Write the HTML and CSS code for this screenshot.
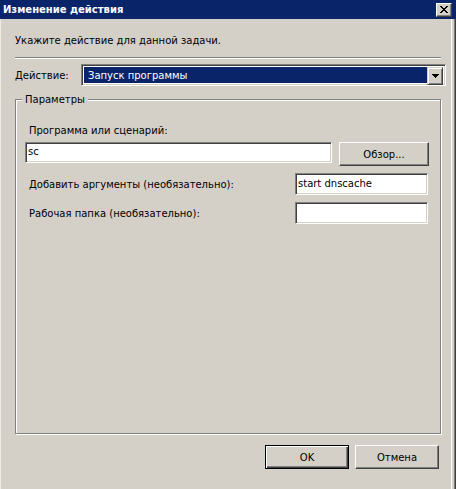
FILE: index.html
```html
<!DOCTYPE html>
<html lang="ru">
<head>
<meta charset="utf-8">
<title>Изменение действия</title>
<link rel="stylesheet" href="styles.css">
</head>
<body>
<div class="window">
  <div class="titlebar">
    <span class="title">Изменение действия</span>
    <span class="close">
      <svg width="8" height="7" viewBox="0 0 8 7" shape-rendering="crispEdges"><path d="M0 0h2v1h-2z M1 1h2v1h-2z M2 2h2v1h-2z M3 3h2v1h-2z M2 4h2v1h-2z M1 5h2v1h-2z M0 6h2v1h-2z M6 0h2v1h-2z M5 1h2v1h-2z M4 2h2v1h-2z M4 4h2v1h-2z M5 5h2v1h-2z M6 6h2v1h-2z" fill="#000"/></svg>
    </span>
  </div>
  <div class="intro">Укажите действие для данной задачи.</div>
  <div class="sep"></div>
  <div class="action-row">
    <span class="action-label">Действие:</span>
    <div class="select">
      <span class="select-value">Запуск программы</span>
      <span class="select-btn"><svg width="7" height="4" viewBox="0 0 7 4" shape-rendering="crispEdges"><path d="M0 0h7v1h-7z M1 1h5v1h-5z M2 2h3v1h-3z M3 3h1v1h-1z" fill="#000"/></svg></span>
    </div>
  </div>
  <div class="group">
    <span class="legend">Параметры</span>
    <div class="label">Программа или сценарий:</div>
    <div class="prog-row">
      <div class="input wide">sc</div>
      <div class="btn browse">Обзор...</div>
    </div>
    <div class="grid">
      <div class="label">Добавить аргументы (необязательно):</div>
      <div class="input">start dnscache</div>
      <div class="label">Рабочая папка (необязательно):</div>
      <div class="input"></div>
    </div>
  </div>
  <div class="footer">
    <div class="btn default">OK</div>
    <div class="btn">Отмена</div>
  </div>
</div>
</body>
</html>
```

FILE: styles.css
```css
* { box-sizing: border-box; }
html, body { margin: 0; padding: 0; }
body {
  font-family: "DejaVu Sans", "Liberation Sans", sans-serif;
  font-size: 10px;
  color: #000;
  background: #d4d0c8;
}
.window {
  width: 456px;
  height: 489px;
  background: #d4d0c8;
  box-shadow: inset 1px 0 0 #ecebe6, inset -1px 0 0 #404040, inset -2px 0 0 #808080, inset -4px 0 0 #d4d0c8, inset -5px 0 0 #ffffff;
  display: flex;
  flex-direction: column;
}
.titlebar {
  height: 19px;
  background: #0a246a;
  color: #fff;
  display: flex;
  align-items: center;
  justify-content: space-between;
  padding: 0 4px 0 3px;
}
.title {
  font-weight: bold;
  font-size: 10px;
  line-height: 13px;
}
.close {
  width: 16px;
  height: 14px;
  background: #d4d0c8;
  border-top: 1px solid #fff;
  border-left: 1px solid #fff;
  border-right: 1px solid #404040;
  border-bottom: 1px solid #404040;
  box-shadow: inset -1px -1px 0 #808080;
  display: flex;
  align-items: center;
  justify-content: center;
  padding: 0 1px 1px 0;
}
.close svg { display: block; }
.intro {
  margin: 15px 0 0 15px;
  line-height: 13px;
  height: 13px;
}
.sep {
  margin: 10px 0 0 15px;
  width: 426px;
  height: 2px;
  border-top: 1px solid #808080;
  border-bottom: 1px solid #fff;
}
.action-row {
  margin-top: 5px;
  display: flex;
  align-items: center;
  height: 22px;
}
.action-label {
  width: 81px;
  padding-left: 15px;
  line-height: 13px;
}
.select {
  width: 365px;
  height: 22px;
  border-top: 1px solid #808080;
  border-left: 1px solid #808080;
  border-right: 1px solid #fff;
  border-bottom: 1px solid #fff;
  box-shadow: inset 1px 1px 0 #404040, inset -1px -1px 0 #d4d0c8;
  padding: 2px;
  display: flex;
  background: #fff;
}
.select-value {
  flex: 1;
  background: #0a246a;
  color: #fff;
  line-height: 16px;
  padding-left: 3px;
  border: 1px solid transparent;
}
.select-btn {
  width: 16px;
  height: 18px;
  background: #d4d0c8;
  border-top: 1px solid #d4d0c8;
  border-left: 1px solid #d4d0c8;
  border-right: 1px solid #404040;
  border-bottom: 1px solid #404040;
  box-shadow: inset 1px 1px 0 #fff, inset -1px -1px 0 #808080;
  display: flex;
  align-items: center;
  justify-content: center;
}
.select-btn svg { display: block; }
.group {
  position: relative;
  margin: 13px 0 0 15px;
  width: 426px;
  height: 335px;
  border: 1px solid #808080;
  box-shadow: inset 1px 1px 0 #fff, 1px 1px 0 #fff;
  padding: 24px 11px 0 9px;
}
.legend {
  position: absolute;
  top: -7px;
  left: 6px;
  background: #d4d0c8;
  padding: 0 3px;
  line-height: 13px;
}
.label {
  padding-left: 4px;
  line-height: 13px;
}
.prog-row {
  margin-top: 5px;
  display: flex;
  gap: 7px;
  align-items: flex-start;
}
.input {
  height: 22px;
  background: #fff;
  border-top: 1px solid #808080;
  border-left: 1px solid #808080;
  border-right: 1px solid #fff;
  border-bottom: 1px solid #fff;
  box-shadow: inset 1px 1px 0 #404040, inset -1px -1px 0 #d4d0c8;
  padding: 0 2px;
  line-height: 19px;
  white-space: nowrap;
}
.input.wide { flex: 1; height: 21px; line-height: 18px; }
.btn {
  height: 24px;
  background: #d4d0c8;
  border-top: 1px solid #fff;
  border-left: 1px solid #fff;
  border-right: 1px solid #404040;
  border-bottom: 1px solid #404040;
  box-shadow: inset -1px -1px 0 #808080;
  display: flex;
  align-items: center;
  justify-content: center;
  line-height: 13px;
  width: 84px;
}
.btn.browse { width: 90px; }
.btn.default {
  border: 1px solid #000;
  box-shadow: inset 1px 1px 0 #fff, inset -1px -1px 0 #404040, inset -2px -2px 0 #808080;
}
.grid {
  margin-top: 7px;
  margin-right: 1px;
  display: grid;
  grid-template-columns: 1fr 133px;
  row-gap: 7px;
  align-items: center;
}
.footer {
  margin-top: 11px;
  display: flex;
  justify-content: flex-end;
  gap: 6px;
  padding-right: 17px;
}
```
